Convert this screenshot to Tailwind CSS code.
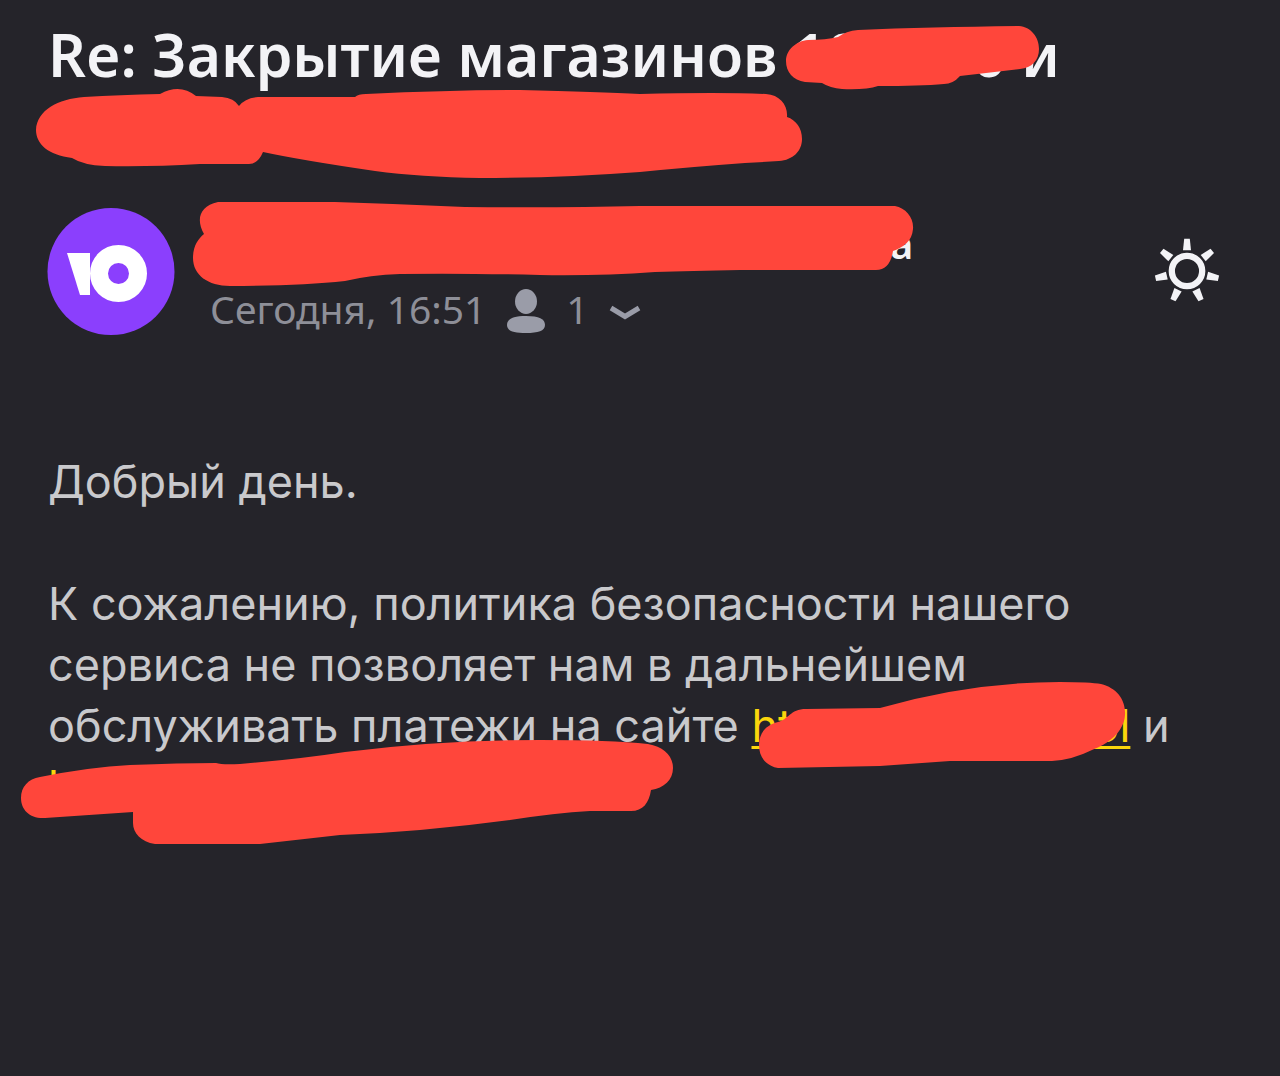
<!DOCTYPE html>
<html lang="ru">
<head>
<meta charset="utf-8">
<meta name="viewport" content="width=device-width, initial-scale=1">
<title>Re: Закрытие магазинов</title>
<script src="https://cdn.jsdelivr.net/npm/@tailwindcss/browser@4"></script>
</head>
<body class="min-h-screen bg-[#25242a] overflow-x-hidden">
<main class="flex flex-col">

  <div class="relative px-12 pt-[17px] h-[190px]">
    <h1 class="font-['Noto_Sans',sans-serif] font-semibold text-[59px] leading-[74px] text-[#f3f3f6]">Re: Закрытие магазинов <span class="whitespace-nowrap">10<span class="inline-block w-[112px]"></span>0</span> и</h1>
    <svg class="pointer-events-none absolute left-0 top-0" width="1280" height="190" viewBox="0 0 1280 190" fill="#ff463b" aria-hidden="true">
      <path d="M808 40Q826 40 838 37Q846 31 858 30Q930 27 1019 26C1031 27 1039 37 1039 49C1039 60 1032 68 1020 69L986 73L960 76Q953 84 944 84Q920 86 878 86Q866 90 842 89Q830 88 822 83L805 82C793 80 786 72 786 61C786 50 796 41 808 40Z"/>
      <path d="M36 130C37 110 58 99 84 97Q120 95 160 94Q180 83 196 96L222 97Q234 98 239 106Q245 98 258 97L355 97Q358 94 366 94Q450 90 520 90Q600 92 640 94Q720 92 766 94C780 95 788 105 787 117C796 120 802 128 802 139C802 151 793 160 779 161L745 163Q690 167 640 172Q560 178 480 178Q420 177 375 171Q300 160 263 152Q258 164 249 164L200 164Q150 167 105 166Q83 165 72 158C48 155 36 144 36 130Z"/>
    </svg>
  </div>

  <header class="relative flex items-start px-12 h-[160px] font-['Noto_Sans',sans-serif]">
    <svg class="mt-[17px] -ml-px size-32 shrink-0" viewBox="0 0 128 128" role="img" aria-label="ЮMoney">
      <circle cx="64" cy="64.500" r="63.500" fill="#8b3ffd"/>
      <path fill="#fff" d="M20 46H43V88H33Z"/>
      <circle cx="71.500" cy="66.500" r="19.500" fill="none" stroke="#fff" stroke-width="18"/>
    </svg>
    <div class="ml-[35px] flex-1 pt-6">
      <p class="mb-[7px] pl-[680px] text-[40px] leading-[60px] font-semibold text-[#f3f3f6]">а</p>
      <div class="flex items-center text-[#8e8f98]">
        <time class="text-[39px] leading-[56px]">Сегодня, 16:51</time>
        <button type="button" class="ml-5 flex items-center text-[39px] leading-[56px]" aria-label="Получатели: 1">
          <svg class="mt-1 h-11 w-10 shrink-0" viewBox="0 0 40 44" fill="#9a9ca8"><ellipse cx="20" cy="12.500" rx="11" ry="12.500"/><path d="M1 36C1 30 7 27 20 27S39 30 39 36C39 42 32 44 20 44S1 42 1 36Z"/></svg>
          <span class="ml-5">1</span>
          <svg class="ml-5 mt-2 h-4 w-8 shrink-0" viewBox="0 0 32 16" fill="none" stroke="#9a9ca8" stroke-width="5"><path d="M2 3L16 11.500L30 3"/></svg>
        </button>
      </div>
    </div>
    <button type="button" class="absolute right-[61px] top-[49px] size-16" aria-label="Светлая тема">
      <svg class="size-16 overflow-visible" viewBox="-32 -32 64 64" fill="#f3f3f6">
        <circle r="15.200" fill="none" stroke="#f3f3f6" stroke-width="6.300"/>
        <path d="M-2.800 -32.300H2.800L4 -20.700H-4Z"/>
        <path transform="rotate(51.430)" d="M-2.800 -32.300H2.800L4 -20.700H-4Z"/>
        <path transform="rotate(102.860)" d="M-2.800 -32.300H2.800L4 -20.700H-4Z"/>
        <path transform="rotate(154.290)" d="M-2.800 -32.300H2.800L4 -20.700H-4Z"/>
        <path transform="rotate(205.710)" d="M-2.800 -32.300H2.800L4 -20.700H-4Z"/>
        <path transform="rotate(257.140)" d="M-2.800 -32.300H2.800L4 -20.700H-4Z"/>
        <path transform="rotate(308.570)" d="M-2.800 -32.300H2.800L4 -20.700H-4Z"/>
      </svg>
    </button>
    <svg class="pointer-events-none absolute left-0 top-0" width="1280" height="160" viewBox="0 190 1280 160" fill="#ff463b" aria-hidden="true">
      <path d="M218 202L335 202Q400 204 465 207Q560 208 640 206L895 206C906 208 914 218 913 229C912 241 904 247 893 251Q890 270 876 270L740 270Q690 271 655 272Q600 276 540 275Q460 273 400 274Q370 275 345 281Q300 286 230 286C208 286 193 275 193 258C193 246 198 239 204 234C196 220 199 206 218 202Z"/>
    </svg>
  </header>

  <article class="relative px-12 pt-[101px] font-['Inter',sans-serif] text-[45px] leading-[61px] text-[#c9c9cc]">
    <p>Добрый день.</p>
    <p class="mt-[61px] max-w-[1150px]">К сожалению, политика безопасности нашего<br>сервиса не позволяет нам в дальнейшем<br>обслуживать платежи на сайте <a href="#" class="whitespace-nowrap text-[#fbd60c] underline decoration-[3px] underline-offset-[4px]">htt<span class="inline-block w-[286px]"></span>ol</a> и<br><a href="#" class="text-[#fbd60c]">h</a></p>
    <svg class="pointer-events-none absolute left-0 top-[320px]" width="1280" height="190" viewBox="0 670 1280 190" fill="#ff463b" aria-hidden="true">
      <path d="M778 722C788 720 790 709 806 709L880 708Q970 682 1060 682Q1090 682 1101 684C1117 688 1126 700 1125 715C1124 732 1108 744 1092 750Q1072 760 1052 761L950 761L880 766L778 768C766 766 759 757 759 745C759 733 766 725 778 722Z"/>
      <path d="M40 777Q90 767 130 765Q180 763 216 763Q222 765 240 764Q300 759 345 752Q440 740 540 740Q610 740 648 744C664 747 673 756 673 768C673 780 664 788 651 790C649 803 643 811 631 811L590 811Q555 813 510 820Q420 832 340 835L260 844L155 844C141 842 133 833 133 823L133 812L45 818C30 819 21 810 21 798C21 787 28 779 40 777Z"/>
    </svg>
  </article>
</main>
</body>
</html>
